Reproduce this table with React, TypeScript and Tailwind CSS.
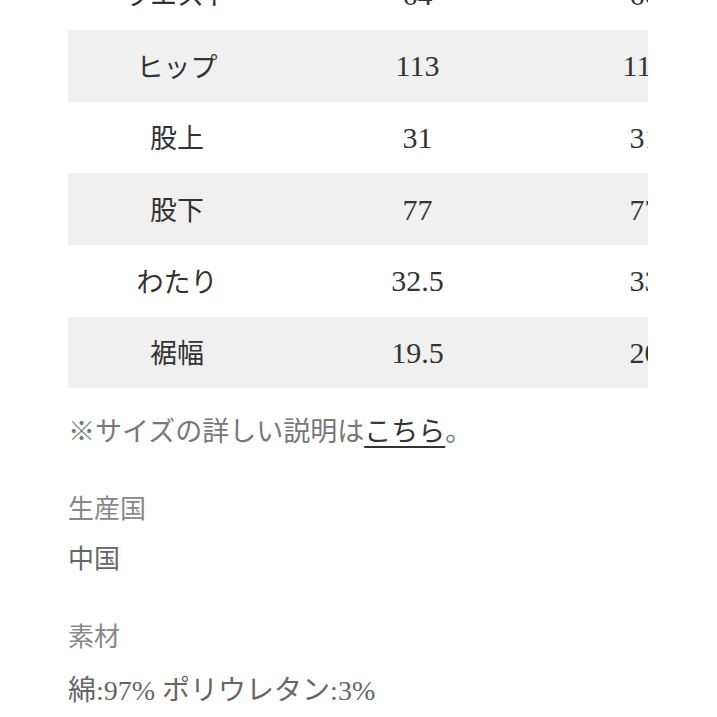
import React from 'react';

type SizeRow = {
  label: string;
  values: string[];
};

const sizeRows: SizeRow[] = [
  { label: 'ウエスト', values: ['64', '66'] },
  { label: 'ヒップ', values: ['113', '115'] },
  { label: '股上', values: ['31', '31'] },
  { label: '股下', values: ['77', '77'] },
  { label: 'わたり', values: ['32.5', '33'] },
  { label: '裾幅', values: ['19.5', '20'] },
];

const App: React.FC = () => {
  return (
    <div
      className="min-h-[717px] w-[717px] overflow-hidden bg-white"
      style={{ fontFamily: '"Liberation Serif", "Noto Sans CJK JP", serif' }}
    >
      <div className="-mt-[41.7px] pl-[68px]">
        {/* size table, clipped at the right edge */}
        <div className="w-[580px] overflow-hidden">
          {sizeRows.map((row, idx) => (
            <div
              key={row.label}
              className={`grid h-[71.7px] w-[672px] grid-cols-[218px_263px_191px] items-center text-[#333] ${idx % 2 === 1 ? 'bg-[#f0f0f0]' : 'bg-white'}`}
            >
              <span
                className="text-center text-[27px]"
                style={{ fontFamily: '"Noto Sans CJK JP", sans-serif' }}
              >
                {row.label}
              </span>
              {row.values.map((v, i) => (
                <span key={i} className="text-center text-[30px]">
                  {v}
                </span>
              ))}
            </div>
          ))}
        </div>

        <p
          className="mt-[22px] text-[27px] leading-[39px] text-[#777]"
          style={{ fontFamily: '"Noto Sans CJK JP", sans-serif' }}
        >
          ※サイズの詳しい説明は
          <a className="text-[#333] underline underline-offset-[5px]">こちら</a>。
        </p>

        <dl className="mt-[35.5px] text-[26px]">
          <dt className="leading-[50px] text-[#888]">生産国</dt>
          <dd className="leading-[50px] text-[#666]">中国</dd>
          <dt className="mt-[26px] leading-[53px] text-[#888]">素材</dt>
          <dd className="text-[28px] leading-[53px] text-[#666]">
            綿:97% ポリウレタン:3%
          </dd>
        </dl>
      </div>
    </div>
  );
};

export default App;
